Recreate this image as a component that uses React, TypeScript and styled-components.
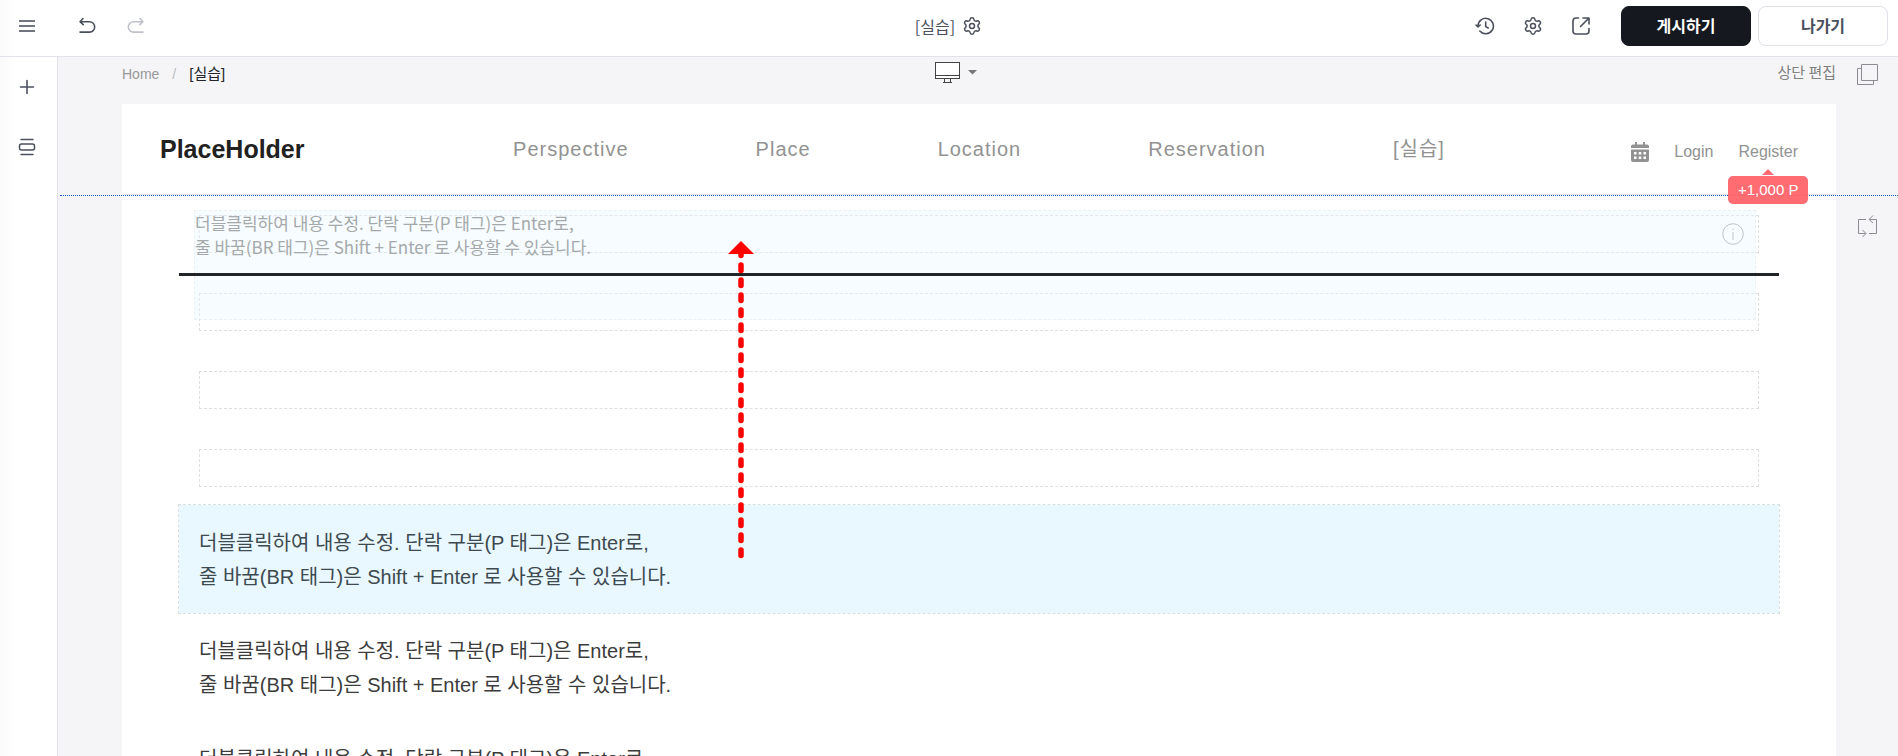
import React from 'react';
import styled, { createGlobalStyle } from 'styled-components';
import { Settings } from 'lucide-react';

const latin = '"Liberation Sans", "Noto Sans CJK KR", sans-serif';
const korean = '"Noto Sans CJK KR", "Liberation Sans", sans-serif';

const GlobalStyle = createGlobalStyle`
  *, *::before, *::after { box-sizing: border-box; }
  body { margin: 0; background: #fff; font-family: ${latin}; color: #212529; }
  a { color: inherit; text-decoration: none; }
  button { font: inherit; color: inherit; margin: 0; padding: 0; border: 0; background: none; cursor: pointer; }
  p { margin: 0; }
  svg { display: block; }
`;

const Editor = styled.div`
  display: flex;
  flex-direction: column;
  height: 100vh;
  overflow: hidden;
  background: linear-gradient(to right, #fafafa, #fff 16px);
`;

const TopBar = styled.header`
  display: grid;
  grid-template-columns: 1fr auto 1fr;
  align-items: center;
  flex: none;
  height: 57px;
  padding: 0 10px 4px 16px;
  border-bottom: 1px solid #e1e2ea;
`;

const Tools = styled.div<{ $gap: number; $end?: boolean }>`
  display: flex;
  align-items: center;
  gap: ${(p) => p.$gap}px;
  justify-content: ${(p) => (p.$end ? 'flex-end' : 'flex-start')};
`;

const IconButton = styled.button<{ $muted?: boolean }>`
  display: flex;
  align-items: center;
  justify-content: center;
  width: 22px;
  height: 22px;
  color: ${(p) => (p.$muted ? '#bfc2cc' : '#4b505d')};
`;

const PageTitle = styled.h1`
  display: flex;
  align-items: center;
  gap: 6px;
  margin: 0;
  padding-right: 6px;
  font: 400 16px/24px ${korean};
  color: #4b505d;
`;

const ActionButton = styled.button<{ $primary?: boolean }>`
  width: 130px;
  height: 40px;
  padding-bottom: 2px;
  border-radius: 8px;
  border: 1px solid ${(p) => (p.$primary ? '#15181e' : '#dfe0e8')};
  background: ${(p) => (p.$primary ? '#15181e' : '#fff')};
  color: ${(p) => (p.$primary ? '#fff' : '#4b505d')};
  font: 700 16px/24px ${korean};
`;

const Actions = styled.div`
  display: flex;
  gap: 7px;
  margin-left: 3px;
`;

const Body = styled.div`
  display: flex;
  flex: 1;
  min-height: 0;
`;

const Sidebar = styled.aside`
  display: flex;
  flex-direction: column;
  gap: 38px;
  flex: none;
  width: 58px;
  padding: 19px 16px;
  border-right: 1px solid #e1e2ea;
`;

const Workspace = styled.main`
  position: relative;
  display: flex;
  gap: 21px;
  flex: 1;
  min-width: 0;
  padding: 0 20px 0 64px;
  background: #f5f5f8;
`;

const Stage = styled.div`
  display: flex;
  flex-direction: column;
  flex: 1;
  min-width: 0;
`;

const StageBar = styled.div`
  display: grid;
  grid-template-columns: 1fr auto 1fr;
  align-items: center;
  flex: none;
  height: 32px;
  margin-bottom: 15px;
`;

const Breadcrumb = styled.nav`
  display: flex;
  gap: 13px;
  font: 14px/20px ${latin};
  color: #999;
  padding-top: 2px;
`;

const Slash = styled.span`
  color: #bbb;
`;

const Current = styled.span`
  font-size: 15px;
  color: #212529;
`;

const DeviceButton = styled.button`
  display: flex;
  align-items: center;
  gap: 8px;
  margin: 0 46px 2px 0;
  color: #777;
`;

const EditHeader = styled.button`
  justify-self: end;
  margin-bottom: 2px;
  font: 400 15px/20px ${korean};
  color: #808080;
`;

const SideTools = styled.div`
  display: flex;
  flex-direction: column;
  gap: 130px;
  flex: none;
  padding-top: 7px;
  color: #8c8c90;
`;

const Canvas = styled.div`
  flex: none;
  background: #fff;
`;

const SiteHeader = styled.div`
  display: grid;
  grid-template-columns: 1fr auto 1fr;
  align-items: center;
  height: 91px;
  padding: 0 38px;
  border-bottom: 1px solid #e5e5e5;
`;

const Brand = styled.a`
  font: 700 25px/32px ${latin};
  color: #212121;
`;

const SiteNav = styled.nav`
  display: flex;
  gap: 127px;
  font: 20px/30px ${latin};
  letter-spacing: 1px;
  color: #929292;
`;

const Account = styled.div`
  display: flex;
  align-items: center;
  justify-content: flex-end;
  gap: 25px;
  padding-top: 6px;
  font: 16px/20px ${latin};
  color: #929292;
`;

const Register = styled.a`
  position: relative;
`;

const PointBadge = styled.span`
  position: absolute;
  z-index: 3;
  top: 34px;
  left: 50%;
  width: 80px;
  margin-left: -40px;
  border-radius: 5px;
  background: rgba(255, 100, 106, 0.95);
  color: #fff;
  font: 15px/28px ${latin};
  text-align: center;
  white-space: nowrap;

  &::before {
    content: '';
    position: absolute;
    left: 34px;
    top: -7px;
    border: 6px solid transparent;
    border-top: 0;
    border-bottom-color: #ff6b70;
  }
`;

const Guide = styled.div`
  position: absolute;
  z-index: 2;
  top: 138px;
  left: 2px;
  right: 0;
  border-top: 1px dotted #1a55d0;
`;

const Section = styled.section`
  position: relative;
  max-width: 1600px;
  margin: 0 auto;
  padding-top: 20px;
`;

const EmptyRows = styled.div`
  display: flex;
  flex-direction: column;
  gap: 40px;
  padding: 0 20px 18px;
`;

const EmptyRow = styled.div`
  display: flex;
  align-items: center;
  justify-content: flex-end;
  height: 38px;
  padding-right: 14px;
  border: 1px dashed #dddfe0;
  color: #a2a2a2;
`;

const TextBlock = styled.p<{ $active?: boolean }>`
  padding: 21px 20px 19px;
  font: 20px/34px ${latin};
  color: ${(p) => (p.$active ? '#3d4a50' : '#3c3c3c')};
  background: ${(p) => (p.$active ? '#e9f7fe' : 'none')};
  outline: ${(p) => (p.$active ? '1px dashed #dadfe2' : 'none')};
`;

const DragGhost = styled.p`
  position: absolute;
  top: 15px;
  left: 15px;
  right: 23px;
  height: 110px;
  border: 1px dashed rgba(218, 223, 226, 0.4);
  background: rgba(233, 247, 254, 0.4);
  font: 400 17px/24px ${korean};
  color: #a5a9ab;
`;

const DropLine = styled.div`
  position: absolute;
  top: 78px;
  left: 0;
  right: 0;
  height: 3px;
  background: #212529;
`;

const Arrow = styled.svg`
  position: absolute;
  z-index: 2;
  top: 46px;
  left: 549px;
`;

const Lines = () => (
  <>
    더블클릭하여 내용 수정. 단락 구분(P 태그)은 Enter로,
    <br />
    줄 바꿈(BR 태그)은 Shift + Enter 로 사용할 수 있습니다.
  </>
);

const line = { fill: 'none', stroke: 'currentColor', strokeLinecap: 'round', strokeLinejoin: 'round' } as const;

const MenuIcon = () => (
  <svg width="18" height="18" viewBox="0 0 18 18" fill="none" stroke="#70757f" strokeWidth="2">
    <path d="M1 4h16M1 9h16M1 14h16" />
  </svg>
);
const UndoIcon = () => (
  <svg width="18" height="18" viewBox="0 0 18 18" {...line} strokeWidth="1.6">
    <path d="M5 1.5 2 4.700l3.200 3M2.300 4.700H11.500a5 5 0 0 1 0 10.400H2" />
  </svg>
);
const RedoIcon = () => (
  <svg width="18" height="18" viewBox="0 0 18 18" {...line} strokeWidth="1.6">
    <path d="M13 1.5 16 4.700l-3.200 3M15.700 4.700H6.500a5 5 0 0 0 0 10.400H16" />
  </svg>
);
const HistoryIcon = () => (
  <svg width="20" height="20" viewBox="0 0 20 20" {...line} strokeWidth="1.6">
    <path d="M3 10a7.700 7.700 0 1 1 1.800 5M1 9l2 2 2.200-2M10.700 6v4.600l2.500 1.400" />
  </svg>
);
const OpenIcon = () => (
  <svg width="20" height="20" viewBox="0 0 20 20" {...line} strokeWidth="1.6">
    <path d="M7.500 2H5a3 3 0 0 0-3 3v10a3 3 0 0 0 3 3h10a3 3 0 0 0 3-3v-2.500M9.500 10.500 18 2M12 2h6v6" />
  </svg>
);
const PlusIcon = () => (
  <svg width="22" height="22" viewBox="0 0 22 22" {...line} strokeWidth="1.6">
    <path d="M4.500 11h13M11 4.500v13" />
  </svg>
);
const SectionIcon = () => (
  <svg width="22" height="22" viewBox="0 0 22 22" {...line} strokeWidth="1.5">
    <path d="M5 3.500h12M5 18.500h12" />
    <rect x="3.500" y="8" width="15" height="6" rx="2" />
  </svg>
);
const MonitorIcon = () => (
  <svg width="25" height="22" viewBox="0 0 25 22" fill="none" stroke="#444">
    <rect x="0.500" y="1.500" width="24" height="16" fill="#fff" />
    <path d="M1 14.500h23M9.500 18v3M15.500 18v3M8 21.500h9" />
  </svg>
);
const CaretIcon = () => (
  <svg width="9" height="5" viewBox="0 0 9 5" fill="currentColor">
    <path d="M0 0h9L4.500 4.500z" />
  </svg>
);
const CopyIcon = () => (
  <svg width="21" height="21" viewBox="0 0 21 21" fill="none" stroke="currentColor">
    <path d="M4.500 4.500h-4v16h16v-4" />
    <path d="M4.500 .5h16v16h-16z" />
  </svg>
);
const SwapIcon = () => (
  <svg width="21" height="23" viewBox="0 0 21 23" fill="none" stroke="currentColor">
    <path d="M9 4.500H1.500v14h7M5.500 15l3.500 3.500L5.500 22M12 18.500h7.500v-14h-7M16 .5l-4 4 4 3.500" />
  </svg>
);
const InfoIcon = () => (
  <svg width="22" height="22" viewBox="0 0 22 22" fill="none" stroke="currentColor">
    <circle cx="11" cy="11" r="10.300" fill="#fff" />
    <path d="M11 9v8M11 5.500v1.500" />
  </svg>
);
const CalendarIcon = () => (
  <svg width="18" height="20" viewBox="0 0 18 20" fill="currentColor">
    <path
      fillRule="evenodd"
      d="M4 0h2v2.500h6V0h2v2.500h2a2 2 0 0 1 2 2V6H0V4.500a2 2 0 0 1 2-2h2zM0 7.500h18V18a2 2 0 0 1-2 2H2a2 2 0 0 1-2-2zM3 10v2.500h2.500V10zm4.700 0v2.500h2.600V10zm4.800 0v2.500H15V10zM3 14.500V17h2.500v-2.500zm4.700 0V17h2.600v-2.500zm4.800 0V17H15v-2.500z"
    />
  </svg>
);

export default function App() {
  return (
    <Editor>
      <GlobalStyle />
      <TopBar>
        <Tools $gap={38}>
          <IconButton aria-label="메뉴"><MenuIcon /></IconButton>
          <Tools $gap={27}>
            <IconButton aria-label="실행 취소"><UndoIcon /></IconButton>
            <IconButton aria-label="다시 실행" $muted><RedoIcon /></IconButton>
          </Tools>
        </Tools>
        <PageTitle>
          [실습]
          <IconButton aria-label="페이지 설정"><Settings size={20} strokeWidth={1.8} /></IconButton>
        </PageTitle>
        <Tools $gap={26} $end>
          <IconButton aria-label="기록"><HistoryIcon /></IconButton>
          <IconButton aria-label="설정"><Settings size={20} strokeWidth={1.8} /></IconButton>
          <IconButton aria-label="새 창"><OpenIcon /></IconButton>
          <Actions>
            <ActionButton $primary>게시하기</ActionButton>
            <ActionButton>나가기</ActionButton>
          </Actions>
        </Tools>
      </TopBar>
      <Body>
        <Sidebar>
          <IconButton aria-label="추가"><PlusIcon /></IconButton>
          <IconButton aria-label="섹션"><SectionIcon /></IconButton>
        </Sidebar>
        <Workspace>
          <Stage>
            <StageBar>
              <Breadcrumb>
                <a href="#home">Home</a>
                <Slash>/</Slash>
                <Current>[실습]</Current>
              </Breadcrumb>
              <DeviceButton aria-label="기기 선택"><MonitorIcon /><CaretIcon /></DeviceButton>
              <EditHeader>상단 편집</EditHeader>
            </StageBar>
            <Canvas>
              <SiteHeader>
                <Brand href="#top">PlaceHolder</Brand>
                <SiteNav>
                  {['Perspective', 'Place', 'Location', 'Reservation', '[실습]'].map((name) => (
                    <a key={name} href="#page">{name}</a>
                  ))}
                </SiteNav>
                <Account>
                  <a href="#calendar" aria-label="일정"><CalendarIcon /></a>
                  <a href="#login">Login</a>
                  <Register href="#register">
                    Register
                    <PointBadge>+1,000 P</PointBadge>
                  </Register>
                </Account>
              </SiteHeader>
              <Section>
                <EmptyRows>
                  <EmptyRow><InfoIcon /></EmptyRow>
                  <EmptyRow />
                  <EmptyRow />
                  <EmptyRow />
                </EmptyRows>
                <TextBlock $active><Lines /></TextBlock>
                <TextBlock><Lines /></TextBlock>
                <TextBlock><Lines /></TextBlock>
                <DragGhost><Lines /></DragGhost>
                <DropLine />
                <Arrow width="26" height="318" viewBox="0 0 26 318">
                  <path d="M13 314.500V10" stroke="#f00" strokeWidth="5.500" strokeLinecap="round" strokeDasharray="5.500 9.500" />
                  <path d="M13 0l13 13H0z" fill="#f00" />
                </Arrow>
              </Section>
            </Canvas>
          </Stage>
          <SideTools>
            <button aria-label="복사"><CopyIcon /></button>
            <button aria-label="교체"><SwapIcon /></button>
          </SideTools>
          <Guide />
        </Workspace>
      </Body>
    </Editor>
  );
}
